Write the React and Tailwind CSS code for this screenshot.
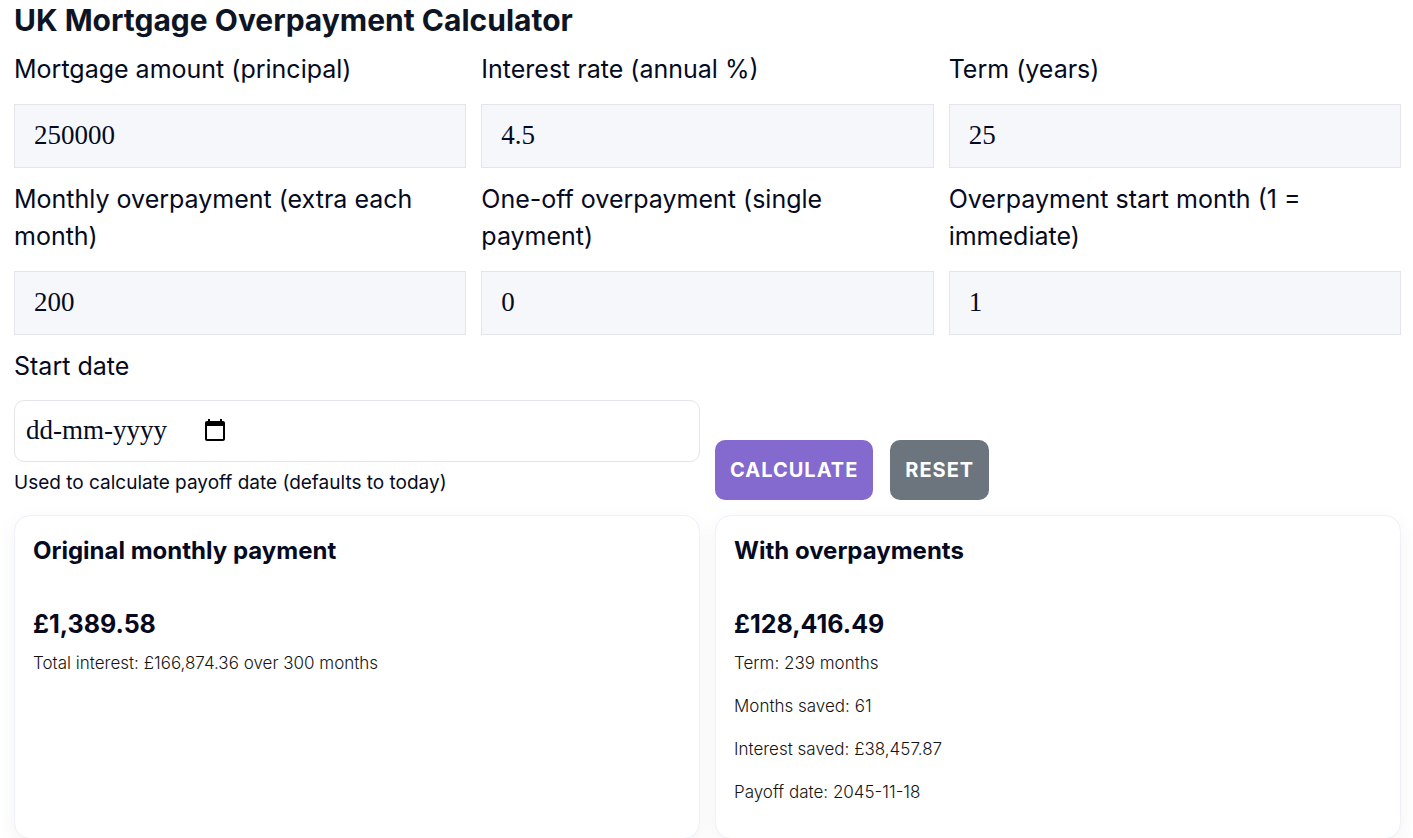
import React, { useState } from 'react';

const initialForm = {
  principal: '250000',
  rate: '4.5',
  years: '25',
  monthly: '200',
  oneOff: '0',
  startMonth: '1',
};

const fields = [
  { name: 'principal', label: 'Mortgage amount (principal)' },
  { name: 'rate', label: 'Interest rate (annual %)' },
  { name: 'years', label: 'Term (years)' },
  { name: 'monthly', label: 'Monthly overpayment (extra each month)' },
  { name: 'oneOff', label: 'One-off overpayment (single payment)' },
  { name: 'startMonth', label: 'Overpayment start month (1 = immediate)' },
];

const ResultCard = ({ title, amount, lines }) => (
  <section className="rounded-2xl border border-[#eef0fd] bg-white px-[18px] pt-4 pb-8 shadow-[0_6px_20px_rgba(0,0,0,0.05)]">
    <h2 className="text-2xl leading-[38px] font-bold">{title}</h2>
    <p className="mt-[34px] text-[25px] leading-10 font-bold">{amount}</p>
    <div className="flex flex-col gap-4 pt-1.5 text-[17px] leading-[27px] font-light text-[#141414]">
      {lines.map(line => (
        <p key={line}>{line}</p>
      ))}
    </div>
  </section>
);

const App = () => {
  const [form, setForm] = useState(initialForm);
  const [startDate, setStartDate] = useState('');

  const handleChange = (e) => {
    setForm({ ...form, [e.target.name]: e.target.value });
  };

  const handleReset = () => {
    setForm(initialForm);
    setStartDate('');
  };

  return (
    <main className="bg-white pr-3 pl-3.5 font-['Inter',sans-serif] text-[#050a1e]">
      <h1 className="pb-2.5 text-[30px] leading-[41px] font-bold text-[#0d1424]">UK Mortgage Overpayment Calculator</h1>

      <form onSubmit={e => e.preventDefault()}>
        <div className="grid grid-cols-3 gap-x-[15px] gap-y-[13px]">
          {fields.map(field => (
            <div key={field.name} className="flex flex-col gap-4">
              <label htmlFor={field.name} className="text-[25px] leading-[37px]">{field.label}</label>
              <input id={field.name} name={field.name} type="text" inputMode="decimal"
                value={form[field.name]} onChange={handleChange}
                className="h-16 w-full border border-[#e3e5ea] bg-[#f5f7fb] px-[19px] pb-0.5 font-['Liberation_Serif',serif] text-[27px]" />
            </div>
          ))}
        </div>

        <div className="mt-[13px] grid grid-cols-2 items-end gap-[15px]">
          <div>
            <label htmlFor="startDate" className="block pb-[15px] text-[25px] leading-[37px]">Start date</label>
            <div className="flex h-[62px] items-center rounded-[10px] border border-[#e3e5ea] px-[11px] pb-0.5">
              <input id="startDate" type="text" placeholder="dd-mm-yyyy" value={startDate}
                onChange={e => setStartDate(e.target.value)} aria-describedby="startDateHelp"
                className="w-[177px] font-['Liberation_Serif',serif] text-[27px] outline-none placeholder:text-[#050a1e]" />
              <button type="button" aria-label="Choose date" className="text-black">
                <svg width="24" height="24" viewBox="0 0 24 24" fill="currentColor">
                  <path d="M20 3h-1V1h-2v2H7V1H5v2H4c-1.100 0-2 .9-2 2v16c0 1.100.9 2 2 2h16c1.100 0 2-.9 2-2V5c0-1.100-.9-2-2-2zm0 18H4V8h16v13z" />
                </svg>
              </button>
            </div>
            <p id="startDateHelp" className="pt-1.5 pb-0.5 text-[19px] leading-[30px]">Used to calculate payoff date (defaults to today)</p>
          </div>
          <div className="flex gap-[17px] text-xl font-bold tracking-wider text-white">
            <button type="submit" className="h-[60px] rounded-[10px] bg-[#8469ce] px-[15px]">CALCULATE</button>
            <button type="button" onClick={handleReset} className="h-[60px] rounded-[10px] bg-[#6c757d] px-[15px]">RESET</button>
          </div>
        </div>
      </form>

      <div className="mt-[15px] grid grid-cols-2 gap-[15px]">
        <ResultCard
          title="Original monthly payment"
          amount="£1,389.58"
          lines={['Total interest: £166,874.36 over 300 months']}
        />
        <ResultCard
          title="With overpayments"
          amount="£128,416.49"
          lines={['Term: 239 months', 'Months saved: 61', 'Interest saved: £38,457.87', 'Payoff date: 2045-11-18']}
        />
      </div>
    </main>
  );
};

export default App;
